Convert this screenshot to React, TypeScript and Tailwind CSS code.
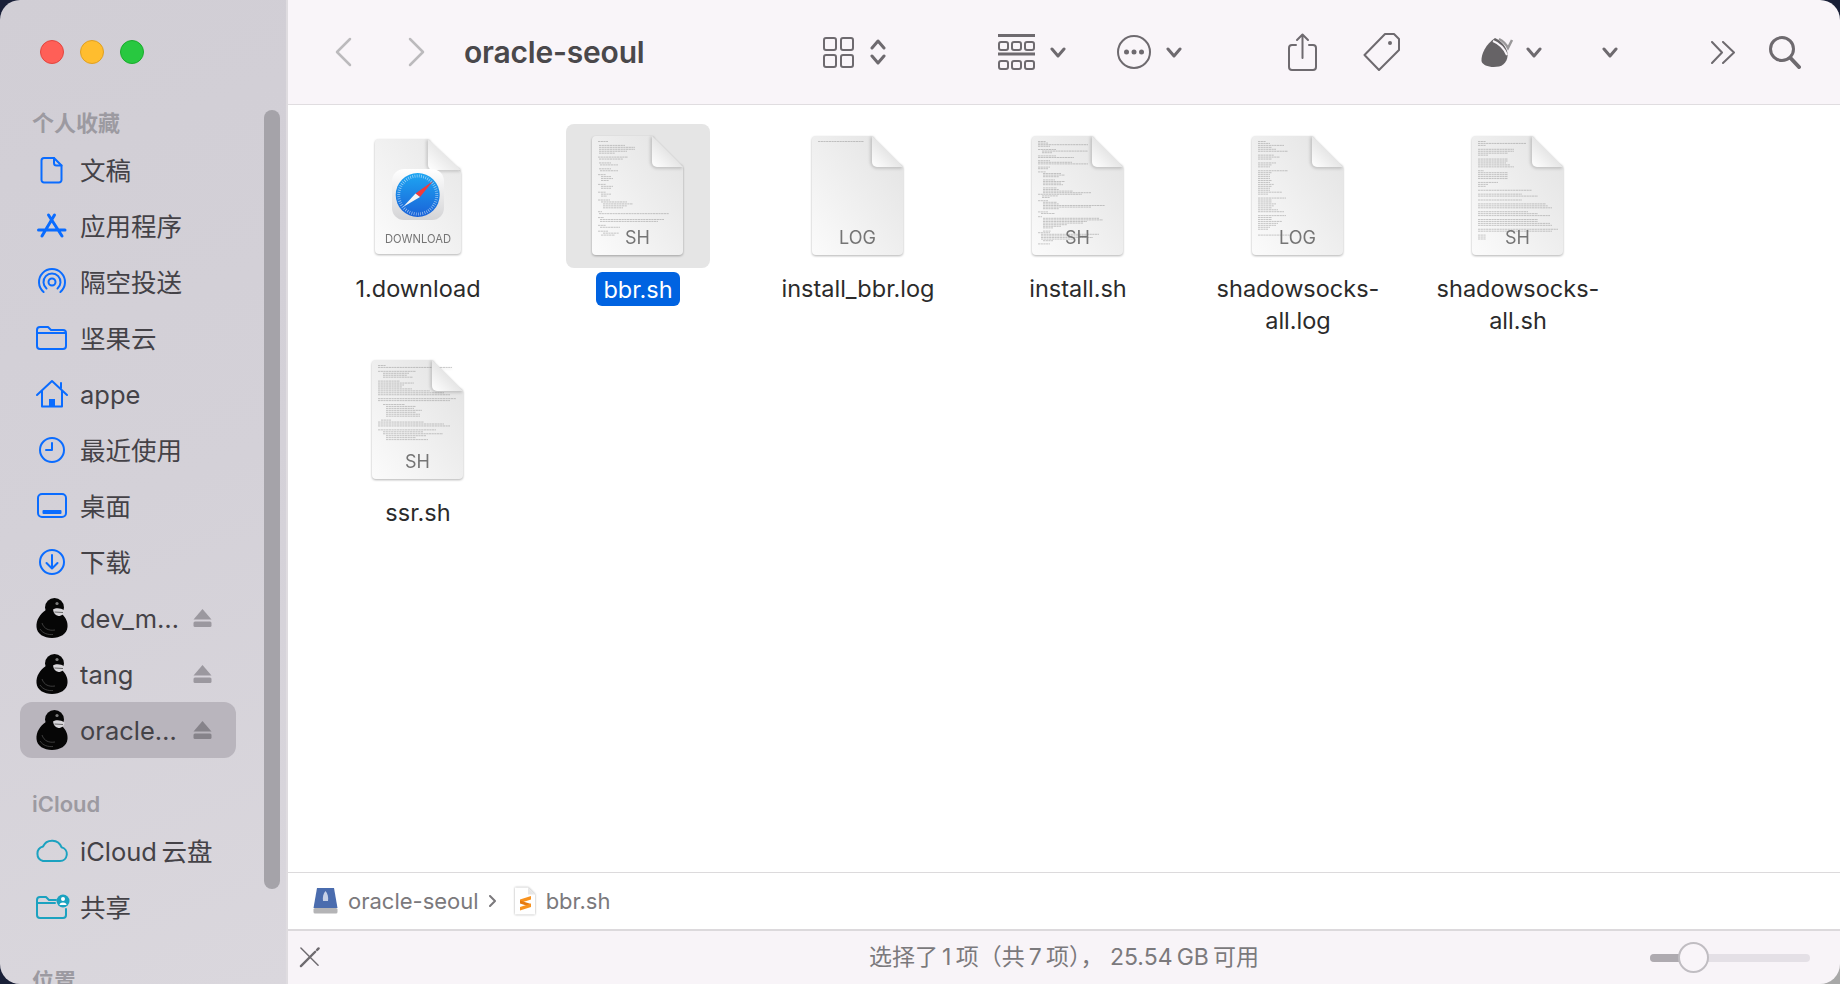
import type { ReactNode } from "react";

const blue = "#0a6cff";
const teal = "#1ba2c0";
const tool = "#6e6a6f";

// thumbnail text, "indent-width" per line, a dot is an empty line
const bbrLines =
  "0-10 . 1-26 1-36 1-36 1-28 1-16 . 0-30 1-24 . 1-12 2-18 . 1-12 2-18 . 0-8 3-10 3-12 3-8 . 0-8 3-12 3-10 . 0-8 3-10 3-6 . 0-12 3-26 5-30 5-24 5-20 . 0-4 1-70 . 0-6 2-64 2-58 . 0-8 2-20 . 0-10 5-16 3-14";
const installLines =
  "0-8 0-10 0-50 0-12 . 0-18 4-46 4-10 . 0-18 0-36 . 0-12 0-34 0-50 . 0-12 0-10 . 0-8 5-18 5-22 5-16 . 5-12 5-22 5-18 5-20 . 5-14 5-16 5-30 5-48 0-44 4-16 4-8 . 0-10 5-14 5-16 5-62 5-48 5-16 . 0-10 3-14 . 0-4 5-56 5-60 5-44 5-40 5-24 5-18 5-10 . 5-8 0-12 3-58 3-46 3-52 3-34 5-10 . 0-12";
const logLines =
  "0-8 0-12 0-26 0-14 0-18 0-30 . 0-16 0-22 0-14 . 0-18 0-14 0-12 . 0-30 0-14 0-12 0-12 0-12 0-14 0-12 0-16 0-14 0-12 0-12 0-24 0-10 . 0-28 0-14 0-14 0-18 0-16 0-14 0-20 0-26 . 0-28 0-14 0-14 0-24 0-20 0-18 0-12 0-10 . . 0-32";
const shadowLines =
  "0-8 0-48 0-8 . 0-36 0-36 0-30 0-10 . 0-30 0-30 0-28 0-32 0-36 . 0-6 0-30 0-30 0-30 0-30 . 0-20 0-10 0-8 . 0-54 . 0-44 0-60 . 0-44 . 0-68 0-70 0-74 . 0-50 0-60 0-72 . 0-60 0-60 0-72 0-74 . 0-80 0-74 . 0-8 0-8 0-8";
const ssrLines =
  "0-8 0-74 . 0-38 5-26 5-24 5-30 . 0-22 0-36 0-26 0-24 0-34 0-52 0-66 0-72 . 0-78 0-72 . 5-22 8-30 8-28 8-36 8-30 8-34 8-34 . 3-10 0-46 0-66 0-72 . 0-58 5-40 5-60 8-40 8-30 8-42";
const logOneLine = "0-46";

function DocShape({ id, lines, children }: { id: string; lines: string; children?: ReactNode }) {
  const rows = lines.split(" ");
  const pitch = Math.min(1.95, 104 / rows.length);
  const d = rows
    .map((r, i) => {
      if (r === ".") return "";
      const [x, w] = r.split("-");
      return `M${32 + Number(x)} ${17.5 + i * pitch}h${w}`;
    })
    .join("");
  return (
    <svg width="144" height="144" viewBox="0 0 144 144" className="drop-shadow-[0_1px_1px_rgba(0,0,0,0.3)]">
      <defs>
        <linearGradient id={id} x1="1" y1="0" x2="0" y2="1">
          <stop offset="0" stopColor="#e2e2e2" />
          <stop offset="1" stopColor="#fbfbfb" />
        </linearGradient>
        <linearGradient id={id + "f"} x1="0" y1="1" x2="1" y2="0">
          <stop offset="0" stopColor="#ffffff" />
          <stop offset="0.5" stopColor="#e6e6e6" />
        </linearGradient>
      </defs>
      <path d="M30 12H86L117 43V127a4 4 0 0 1-4 4H30a4 4 0 0 1-4-4V16a4 4 0 0 1 4-4Z" fill={`url(#${id})`} />
      <path d={d} stroke="#5e5e5e" strokeOpacity="0.45" strokeWidth="0.7" strokeDasharray="2.2 0.5" fill="none" />
      <path d="M86 13V38a5 5 0 0 0 5 5H116" fill="none" stroke="#000000" strokeOpacity="0.2" strokeWidth="3" className="blur-[1.5px]" />
      <path d="M86 12V38a5 5 0 0 0 5 5H117Z" fill={`url(#${id}f)`} />
      {children}
    </svg>
  );
}

function ExtLabel({ text }: { text: string }) {
  return (
    <text x="71.5" y="120" textAnchor="middle" fontSize="18" fill="#757575" fontFamily="Inter, sans-serif">
      {text}
    </text>
  );
}

function SafariDoc() {
  return (
    <svg width="144" height="144" viewBox="0 0 144 144" className="drop-shadow-[0_1px_1px_rgba(0,0,0,0.3)]">
      <defs>
        <linearGradient id="sd" x1="1" y1="0" x2="0" y2="1">
          <stop offset="0" stopColor="#e6e6e6" />
          <stop offset="1" stopColor="#fcfcfc" />
        </linearGradient>
        <linearGradient id="sf" x1="0" y1="1" x2="1" y2="0">
          <stop offset="0" stopColor="#ffffff" />
          <stop offset="0.5" stopColor="#e8e8e8" />
        </linearGradient>
        <linearGradient id="sb" x1="0" y1="0" x2="0" y2="1">
          <stop offset="0" stopColor="#1ea6f2" />
          <stop offset="1" stopColor="#1a62d8" />
        </linearGradient>
        <linearGradient id="st" x1="0" y1="0" x2="0" y2="1">
          <stop offset="0" stopColor="#ffffff" />
          <stop offset="1" stopColor="#d4d4d6" />
        </linearGradient>
      </defs>
      <g transform="translate(-2 0)">
        <path d="M35 15H84L117 48V126a4 4 0 0 1-4 4H35a4 4 0 0 1-4-4V19a4 4 0 0 1 4-4Z" fill="url(#sd)" />
        <path d="M84 16V41a5 5 0 0 0 5 5H116" fill="none" stroke="#000000" strokeOpacity="0.18" strokeWidth="3" className="blur-[1.5px]" />
        <path d="M84 15V41a5 5 0 0 0 5 5H117Z" fill="url(#sf)" />
        <rect x="48" y="45" width="52" height="51" rx="12" fill="url(#st)" />
        <circle cx="73.7" cy="71" r="22" fill="url(#sb)" />
        <circle cx="73.7" cy="71" r="19" fill="none" stroke="#ffffff" strokeOpacity="0.6" strokeWidth="3" strokeDasharray="0.7 1.5" />
        <path d="M71.5 69.5L89 57L76 73Z" fill="#f23a3a" />
        <path d="M71.5 69.5L59 83L76 73Z" fill="#f4f4f4" />
        <text x="74" y="119" textAnchor="middle" fontSize="11.2" fill="#757575" fontFamily="Inter, sans-serif">
          DOWNLOAD
        </text>
      </g>
    </svg>
  );
}

function Duck() {
  return (
    <svg width="32" height="40" viewBox="0 0 32 40">
      <circle cx="18.500" cy="9.500" r="9.500" fill="#060606" />
      <path d="M10 12C4 16 0 22 0.500 29C1 36 8 40 16 40C24 40 31 36 31.500 29C32 24 30 20 26 16Z" fill="#060606" />
      <path d="M17 11.500C20 9.500 25 10 28.500 12.500C28.500 15.500 26 18 22.500 18C19.500 17.500 17.500 15 17 11.500Z" fill="#d8d6da" />
      <path d="M18.500 14L27 14.500" stroke="#4a4a4a" strokeWidth="0.8" />
      <circle cx="21" cy="5.500" r="1.600" fill="#7a7a7a" />
      <path d="M6 25C8 31 13 33 19 32M4 31C7 35.500 12 37 17 36.500" stroke="#4a4a4a" strokeWidth="0.8" fill="none" />
    </svg>
  );
}

function SideIcon({ color = blue, children }: { color?: string; children: ReactNode }) {
  return (
    <svg width="36" height="32" viewBox="0 0 36 32" fill="none" stroke={color} strokeWidth="2" strokeLinecap="round" strokeLinejoin="round">
      {children}
    </svg>
  );
}

const icons: Record<string, ReactNode> = {
  doc: (
    <SideIcon>
      <path d="M10 4H20L27.500 11.500V26a2.500 2.500 0 0 1-2.500 2.500H10A2.500 2.500 0 0 1 7.500 26V6.500A2.500 2.500 0 0 1 10 4Z" />
      <path d="M20 4V9a2.500 2.500 0 0 0 2.500 2.500H27.500" />
    </SideIcon>
  ),
  apps: (
    <SideIcon>
      <path d="M14.500 5L28 26M20.500 5L8 26M4.500 20H31" strokeWidth="3" />
    </SideIcon>
  ),
  airdrop: (
    <SideIcon>
      <path d="M9.600 26A13 13 0 1 1 26.400 26" />
      <path d="M12.500 22.500A8.500 8.500 0 1 1 23.500 22.500" />
      <circle cx="18" cy="16" r="3.500" />
    </SideIcon>
  ),
  folder: (
    <SideIcon>
      <path d="M3 8a3 3 0 0 1 3-3h8l3 3h12a3 3 0 0 1 3 3v13a3 3 0 0 1-3 3H6a3 3 0 0 1-3-3ZM3 11H32" />
    </SideIcon>
  ),
  home: (
    <SideIcon>
      <path d="M3 17L18 3L33 17M8 13V28.500H28V13M27 5V10" />
      <rect x="15" y="21" width="6" height="7" fill={blue} stroke="none" />
    </SideIcon>
  ),
  clock: (
    <SideIcon>
      <circle cx="18" cy="16" r="12" />
      <path d="M18 9V16H12" />
    </SideIcon>
  ),
  desktop: (
    <SideIcon>
      <rect x="4" y="4" width="28" height="23" rx="4" />
      <rect x="8.500" y="20" width="19" height="4" rx="1" fill={blue} stroke="none" />
    </SideIcon>
  ),
  download: (
    <SideIcon>
      <circle cx="18" cy="16" r="12" />
      <path d="M18 9V22M12.500 17L18 22.500L23.500 17" />
    </SideIcon>
  ),
  cloud: (
    <SideIcon color={teal}>
      <path d="M9 26H26A7 7 0 0 0 27.500 12.200A10 10 0 0 0 9 11.500A7.500 7.500 0 0 0 9 26Z" />
    </SideIcon>
  ),
  shared: (
    <SideIcon color={teal}>
      <path d="M22 9H15L12 6H6A3 3 0 0 0 3 9V24A3 3 0 0 0 6 27H29A3 3 0 0 0 32 24V18M3 12H21" />
      <circle cx="29" cy="10" r="6.500" fill={teal} stroke="none" />
      <circle cx="29" cy="8" r="2" fill="#ffffff" stroke="none" />
      <path d="M25.500 14a3.500 2.500 0 0 1 7 0Z" fill="#ffffff" stroke="none" />
    </SideIcon>
  ),
};

function Eject({ color }: { color: string }) {
  return (
    <svg width="19" height="18" viewBox="0 0 19 18">
      <path d="M9.500 0L18.500 10.500H0.500Z" fill={color} />
      <rect x="0.500" y="12.500" width="18" height="5.500" rx="1.500" fill={color} />
    </svg>
  );
}

function SideRow({ icon, label, eject, active }: { icon: ReactNode; label: string; eject?: boolean; active?: boolean }) {
  return (
    <div className={`ml-[20px] flex h-[56px] w-[216px] shrink-0 items-center rounded-[12px] pl-[14px] pr-[24px] ${active ? "bg-[#b9b5bd]" : ""}`}>
      <div className="flex w-[36px] shrink-0 justify-center">{icon}</div>
      <span className="ml-[10px] flex-1 whitespace-nowrap pt-[2px] text-[25.500px] leading-none text-[#444247]">{label}</span>
      {eject && <Eject color={active ? "#86838a" : "#9b989f"} />}
    </div>
  );
}

function SideHeader({ label, className }: { label: string; className?: string }) {
  return (
    <div className={`flex h-[34px] shrink-0 items-center pb-[4px] pl-[32px] text-[22px] font-semibold leading-none text-[#9c9aa1] ${className ?? ""}`}>
      {label}
    </div>
  );
}

function Sidebar() {
  return (
    <aside className="relative flex h-full w-[288px] shrink-0 flex-col overflow-hidden border-r-2 border-[#dfdce0] bg-[linear-gradient(160deg,#d1ced5,#d4d1d8_50%,#dad7dd)]">
      <div className="flex h-[108px] shrink-0 gap-[16px] pl-[40px] pt-[40px]">
        <span className="h-[24px] w-[24px] rounded-full border border-[#e2463f] bg-[#ff5f57]" />
        <span className="h-[24px] w-[24px] rounded-full border border-[#dfa023] bg-[#ffbd2e]" />
        <span className="h-[24px] w-[24px] rounded-full border border-[#1aac2c] bg-[#28c840]" />
      </div>
      <SideHeader label="个人收藏" />
      <SideRow icon={icons.doc} label="文稿" />
      <SideRow icon={icons.apps} label="应用程序" />
      <SideRow icon={icons.airdrop} label="隔空投送" />
      <SideRow icon={icons.folder} label="坚果云" />
      <SideRow icon={icons.home} label="appe" />
      <SideRow icon={icons.clock} label="最近使用" />
      <SideRow icon={icons.desktop} label="桌面" />
      <SideRow icon={icons.download} label="下载" />
      <SideRow icon={<Duck />} label="dev_m…" eject />
      <SideRow icon={<Duck />} label="tang" eject />
      <SideRow icon={<Duck />} label="oracle…" eject active />
      <SideHeader label="iCloud" className="mt-[31px]" />
      <SideRow icon={icons.cloud} label={"iCloud\u2009云盘"} />
      <SideRow icon={icons.shared} label="共享" />
      <SideHeader label="位置" className="mt-[31px]" />
      <div className="absolute left-[264px] top-[110px] h-[779px] w-[16px] rounded-full bg-[#a5a3a9]" />
    </aside>
  );
}

function Chev({ className = "" }: { className?: string }) {
  return (
    <svg width="16" height="11" viewBox="0 0 16 11" fill="none" stroke={tool} strokeWidth="3" strokeLinecap="round" strokeLinejoin="round" className={className}>
      <path d="M2 2L8 9L14 2" />
    </svg>
  );
}

function Toolbar() {
  return (
    <header className="flex h-[105px] shrink-0 items-center border-b border-[#e0dde0] bg-[#f9f5f9]">
      <svg width="17" height="30" viewBox="0 0 17 30" fill="none" stroke="#bcbabd" strokeWidth="2.500" strokeLinecap="round" strokeLinejoin="round" className="ml-[47px]">
        <path d="M15 2L2 15L15 28" />
      </svg>
      <svg width="17" height="30" viewBox="0 0 17 30" fill="none" stroke="#bcbabd" strokeWidth="2.500" strokeLinecap="round" strokeLinejoin="round" className="ml-[56px]">
        <path d="M2 2L15 15L2 28" />
      </svg>
      <h1 className="ml-[39px] w-[178px] whitespace-nowrap text-[30px] font-semibold leading-none tracking-[-0.2px] text-[#4a484b]">oracle-seoul</h1>
      <svg width="31" height="31" viewBox="0 0 31 31" fill="none" stroke={tool} strokeWidth="2" className="ml-[181px]">
        <rect x="1" y="1" width="12" height="12" rx="2" />
        <rect x="18" y="1" width="12" height="12" rx="2" />
        <rect x="1" y="18" width="12" height="12" rx="2" />
        <rect x="18" y="18" width="12" height="12" rx="2" />
      </svg>
      <svg width="16" height="28" viewBox="0 0 16 28" fill="none" stroke={tool} strokeWidth="3" strokeLinecap="round" strokeLinejoin="round" className="ml-[16px]">
        <path d="M2 10L8 3L14 10M2 18L8 25L14 18" />
      </svg>
      <svg width="37" height="36" viewBox="0 0 37 36" fill="none" stroke={tool} strokeWidth="2" className="ml-[112px]">
        <path d="M0 1.500H37M0 20H37" strokeWidth="3" />
        <rect x="1" y="8" width="9" height="8" rx="2" />
        <rect x="14" y="8" width="9" height="8" rx="2" />
        <rect x="27" y="8" width="9" height="8" rx="2" />
        <rect x="1" y="27" width="9" height="8" rx="2" />
        <rect x="14" y="27" width="9" height="8" rx="2" />
        <rect x="27" y="27" width="9" height="8" rx="2" />
      </svg>
      <Chev className="ml-[15px]" />
      <svg width="34" height="34" viewBox="0 0 34 34" fill="none" stroke={tool} strokeWidth="2" className="ml-[51px]">
        <circle cx="17" cy="17" r="16" />
        <circle cx="9.500" cy="17" r="2.500" fill={tool} stroke="none" />
        <circle cx="17" cy="17" r="2.500" fill={tool} stroke="none" />
        <circle cx="24.500" cy="17" r="2.500" fill={tool} stroke="none" />
      </svg>
      <Chev className="ml-[15px]" />
      <svg width="29" height="38" viewBox="0 0 29 38" fill="none" stroke={tool} strokeWidth="2" strokeLinecap="round" strokeLinejoin="round" className="ml-[106px]">
        <path d="M8 12H4a3 3 0 0 0-3 3V34a3 3 0 0 0 3 3H25a3 3 0 0 0 3-3V15a3 3 0 0 0-3-3H21" />
        <path d="M14.500 25V1.500M9 7L14.500 1.500L20 7" />
      </svg>
      <svg width="37" height="38" viewBox="0 0 37 38" fill="none" stroke={tool} strokeWidth="2" strokeLinejoin="round" className="ml-[46px]">
        <path d="M22 1H31L36 6V17L16 37L1.500 22Z" />
        <circle cx="27" cy="10" r="2" fill={tool} stroke="none" />
      </svg>
      <svg width="33" height="31" viewBox="0 0 33 31" className="ml-[81px]">
        <path d="M14 1C5 7 0 17 0.500 24C1.500 29 10 31 18 29.500C25 28 28 20 26 14C24 8 19 3 14 1Z" fill="#666366" />
        <path d="M12 4C17 6 23 11 26 18" fill="none" stroke="#f9f5f9" strokeWidth="2" />
        <path d="M18 2C22 4 25 7 27 11L31 3" fill="none" stroke="#9a989a" strokeWidth="2.500" />
      </svg>
      <Chev className="ml-[12px]" />
      <Chev className="ml-[60px]" />
      <svg width="24" height="23" viewBox="0 0 24 23" fill="none" stroke={tool} strokeWidth="2" strokeLinecap="round" strokeLinejoin="round" className="ml-[93px]">
        <path d="M1 1L11 11.500L1 22M12 1L23 11.500L12 22" />
      </svg>
      <svg width="32" height="33" viewBox="0 0 32 33" fill="none" stroke={tool} strokeWidth="3" strokeLinecap="round" className="ml-[34px]">
        <circle cx="13" cy="13" r="11.500" />
        <path d="M21.500 22L30 31" strokeWidth="4" />
      </svg>
    </header>
  );
}

const files: { name: string; icon: ReactNode; selected?: boolean }[] = [
  { name: "1.download", icon: <SafariDoc /> },
  {
    name: "bbr.sh",
    selected: true,
    icon: (
      <DocShape id="d1" lines={bbrLines}>
        <ExtLabel text="SH" />
      </DocShape>
    ),
  },
  {
    name: "install_bbr.log",
    icon: (
      <DocShape id="d2" lines={logOneLine}>
        <ExtLabel text="LOG" />
      </DocShape>
    ),
  },
  {
    name: "install.sh",
    icon: (
      <DocShape id="d3" lines={installLines}>
        <ExtLabel text="SH" />
      </DocShape>
    ),
  },
  {
    name: "shadowsocks-all.log",
    icon: (
      <DocShape id="d4" lines={logLines}>
        <ExtLabel text="LOG" />
      </DocShape>
    ),
  },
  {
    name: "shadowsocks-all.sh",
    icon: (
      <DocShape id="d5" lines={shadowLines}>
        <ExtLabel text="SH" />
      </DocShape>
    ),
  },
  {
    name: "ssr.sh",
    icon: (
      <DocShape id="d6" lines={ssrLines}>
        <ExtLabel text="SH" />
      </DocShape>
    ),
  },
];

function FileGrid() {
  return (
    <div className="grid flex-1 auto-rows-[224px] grid-cols-[repeat(6,220px)] bg-white pl-[20px] pt-[19px]">
      {files.map((f) => (
        <div key={f.name} className="flex flex-col items-center">
          <div className={`h-[144px] w-[144px] rounded-[8px] ${f.selected ? "bg-[#e5e5e5]" : ""}`}>{f.icon}</div>
          {f.selected ? (
            <div className="mt-[4px] rounded-[6px] bg-[#0063e1] px-[7px] pt-[2px] text-[23.500px] leading-[32px] text-white">{f.name}</div>
          ) : (
            <div className="mt-[5px] w-[172px] text-center text-[23.500px] leading-[32px] text-[#2b2b2b]">{f.name}</div>
          )}
        </div>
      ))}
    </div>
  );
}

function PathBar() {
  return (
    <div className="flex h-[57px] shrink-0 items-center border-t border-[#dcdadc] bg-white pl-[25px] text-[22px] leading-none text-[#7b797c]">
      <svg width="25" height="26" viewBox="0 0 25 26">
        <path d="M4 0H21L24.500 20H0.500Z" fill="#4a6cae" />
        <path d="M12.500 3C10 6 9.500 9 10 13H15C15.500 9 15 6 12.500 3Z" fill="#c6d0e6" />
        <rect x="0.500" y="20" width="24" height="5.500" rx="1.500" fill="#b4b4b6" />
      </svg>
      <span className="ml-[10px]">oracle-seoul</span>
      <svg width="7" height="12" viewBox="0 0 7 12" fill="none" stroke="#7b797c" strokeWidth="2" strokeLinecap="round" strokeLinejoin="round" className="ml-[10px]">
        <path d="M1 1L6 6L1 11" />
      </svg>
      <svg width="22" height="28" viewBox="0 0 22 28" className="ml-[18px] drop-shadow-[0_0_1px_rgba(0,0,0,0.35)]">
        <path d="M1 0.500H14L21 7.500V27.500H1Z" fill="#ffffff" />
        <path d="M14 0.500V7.500H21Z" fill="#e6e6e6" />
        <path d="M17 9V12.500L6 16V12.500Z" fill="#f8921e" />
        <path d="M6 13.500L17 17V20L6 16.500Z" fill="#e57a10" />
        <path d="M17 16.500V20L6 23.500V20Z" fill="#f8921e" />
      </svg>
      <span className="ml-[10px]">bbr.sh</span>
    </div>
  );
}

function StatusBar() {
  return (
    <footer className="grid h-[55px] shrink-0 grid-cols-[1fr_auto_1fr] items-center border-t-2 border-[#dcd9dc] bg-[#f8f4f8] text-[#7b797c]">
      <div className="pl-[11px]">
        <svg width="21" height="21" viewBox="0 0 22 22" fill="none" stroke="#6e6a6f" strokeLinecap="round">
          <path d="M2 1L20 19" strokeWidth="1.500" />
          <path d="M2 20L17 5" strokeWidth="2.500" />
          <path d="M19 3L20.500 1.500" strokeWidth="2.500" />
        </svg>
      </div>
      <span className="text-[23px] leading-none">{"选择了\u20091\u2009项（共\u20097\u2009项）， 25.54\u2009GB\u2009可用"}</span>
      <div className="flex justify-end pr-[30px]">
        <div className="relative flex h-[8px] w-[160px] items-center rounded-full bg-[#e4e0e6]">
          <div className="h-[8px] w-[36px] rounded-l-full bg-[#aeaab0]" />
          <div className="absolute left-[28px] h-[31px] w-[31px] rounded-full border-2 border-[#c0bdc2] bg-[#f9f5f9]" />
        </div>
      </div>
    </footer>
  );
}

export default function App() {
  return (
    <div className="h-[984px] w-[1840px] overflow-hidden bg-[linear-gradient(to_bottom_right,#1a2038_97%,#a8a8a8_99%)] font-[family-name:Inter,'Noto_Sans_CJK_SC',sans-serif]">
      <div className="flex h-full w-full overflow-hidden rounded-[20px]">
        <Sidebar />
        <main className="flex min-w-0 flex-1 flex-col">
          <Toolbar />
          <FileGrid />
          <PathBar />
          <StatusBar />
        </main>
      </div>
    </div>
  );
}
